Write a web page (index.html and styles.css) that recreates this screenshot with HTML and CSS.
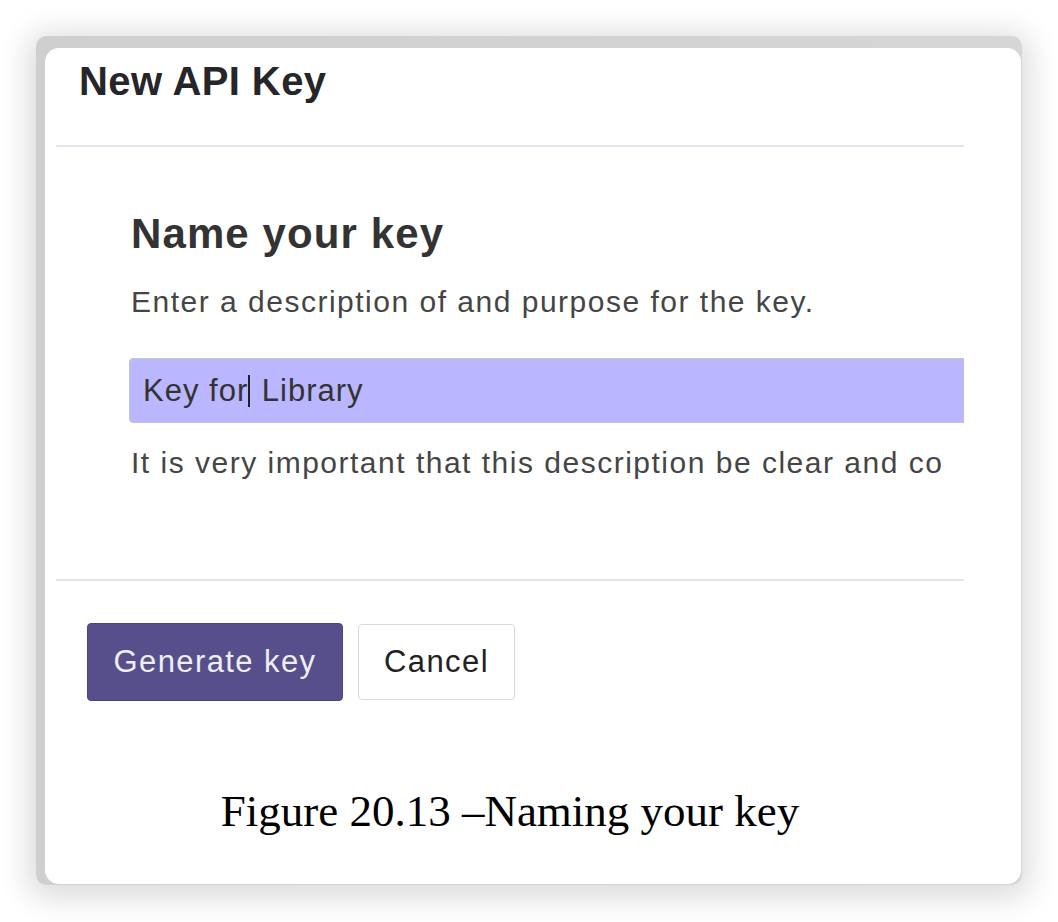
FILE: index.html
```html
<!DOCTYPE html>
<html lang="en">
<head>
<meta charset="utf-8">
<title>New API Key</title>
<link rel="stylesheet" href="styles.css">
</head>
<body>
<div class="frame">
  <div class="card">
    <div class="dialog">
      <div class="dialog-header">
        <h1 class="dialog-title">New API Key</h1>
      </div>
      <div class="dialog-body">
        <h2 class="section-title">Name your key</h2>
        <p class="section-desc">Enter a description of and purpose for the key.</p>
        <div class="name-input"><span class="typed">Key for</span><span class="caret"></span><span class="typed"> Library</span></div>
        <p class="helper">It is very important that this description be clear and co</p>
      </div>
      <div class="dialog-footer">
        <button class="btn btn-primary">Generate key</button>
        <button class="btn btn-secondary">Cancel</button>
      </div>
      <p class="caption">Figure 20.13 –Naming your key</p>
    </div>
  </div>
</div>
</body>
</html>
```

FILE: styles.css
```css
html, body {
  margin: 0;
  padding: 0;
  background: #ffffff;
}

body {
  width: 1058px;
  height: 922px;
  overflow: hidden;
  padding-top: 36px;
  padding-left: 36px;
  box-sizing: border-box;
  font-family: "Liberation Sans", Arial, sans-serif;
}

.frame {
  width: 986px;
  height: 849px;
  box-sizing: border-box;
  background: linear-gradient(90deg, #cfcfcf 0%, #d6d6d6 100%);
  border-radius: 10px;
  padding: 12px 1px 1px 9px;
  box-shadow: 0 5px 30px 8px rgba(0, 0, 0, 0.14);
}

.card {
  width: 976px;
  height: 836px;
  background: #ffffff;
  border-radius: 14px;
  padding-left: 11px;
  box-sizing: border-box;
  overflow: hidden;
}

.dialog {
  width: 908px;
  overflow: hidden;
}

.dialog-header {
  padding: 9px 0 40px 23px;
  border-bottom: 2px solid #e4e5ec;
}

.dialog-title {
  margin: 0;
  font-size: 40px;
  line-height: 48px;
  font-weight: 700;
  letter-spacing: 0.4px;
  color: #26262a;
}

.dialog-body {
  padding: 62px 0 99px 73px;
  border-bottom: 2px solid #e4e5ec;
}

.section-title {
  margin: 0 0 0 2px;
  font-size: 42px;
  line-height: 50px;
  font-weight: 700;
  letter-spacing: 1.1px;
  color: #333333;
}

.section-desc {
  margin: 26px 0 0 2px;
  font-size: 30px;
  line-height: 34px;
  letter-spacing: 1.5px;
  color: #454545;
}

.name-input {
  margin-top: 39px;
  width: 900px;
  height: 65px;
  box-sizing: border-box;
  background: #bab6ff;
  border: 1px solid #c4c4cc;
  border-radius: 4px;
  padding-left: 13px;
  display: flex;
  align-items: center;
  font-size: 31px;
  letter-spacing: 1px;
  color: #333333;
  white-space: pre;
}

.caret {
  display: inline-block;
  width: 2px;
  height: 32px;
  margin-right: 2px;
  background: #222222;
}

.helper {
  margin: 23px 0 0 2px;
  font-size: 30px;
  line-height: 34px;
  letter-spacing: 1.5px;
  color: #454545;
  white-space: nowrap;
}

.dialog-footer {
  display: flex;
  align-items: center;
  gap: 15px;
  padding: 42px 0 0 31px;
}

.btn {
  font-family: "Liberation Sans", Arial, sans-serif;
  font-size: 31px;
  letter-spacing: 1.4px;
  border-radius: 4px;
  box-sizing: border-box;
  cursor: pointer;
}

.btn-primary {
  width: 256px;
  height: 78px;
  background: #574f8b;
  border: 1px solid #4d467e;
  color: #eeeef6;
}

.btn-secondary {
  width: 157px;
  height: 76px;
  background: #ffffff;
  border: 1px solid #d6d8de;
  color: #222222;
}

.caption {
  margin: 83px 0 0 0;
  text-align: center;
  font-family: "Liberation Serif", "Times New Roman", serif;
  font-size: 45px;
  line-height: 54px;
  color: #000000;
}
```
